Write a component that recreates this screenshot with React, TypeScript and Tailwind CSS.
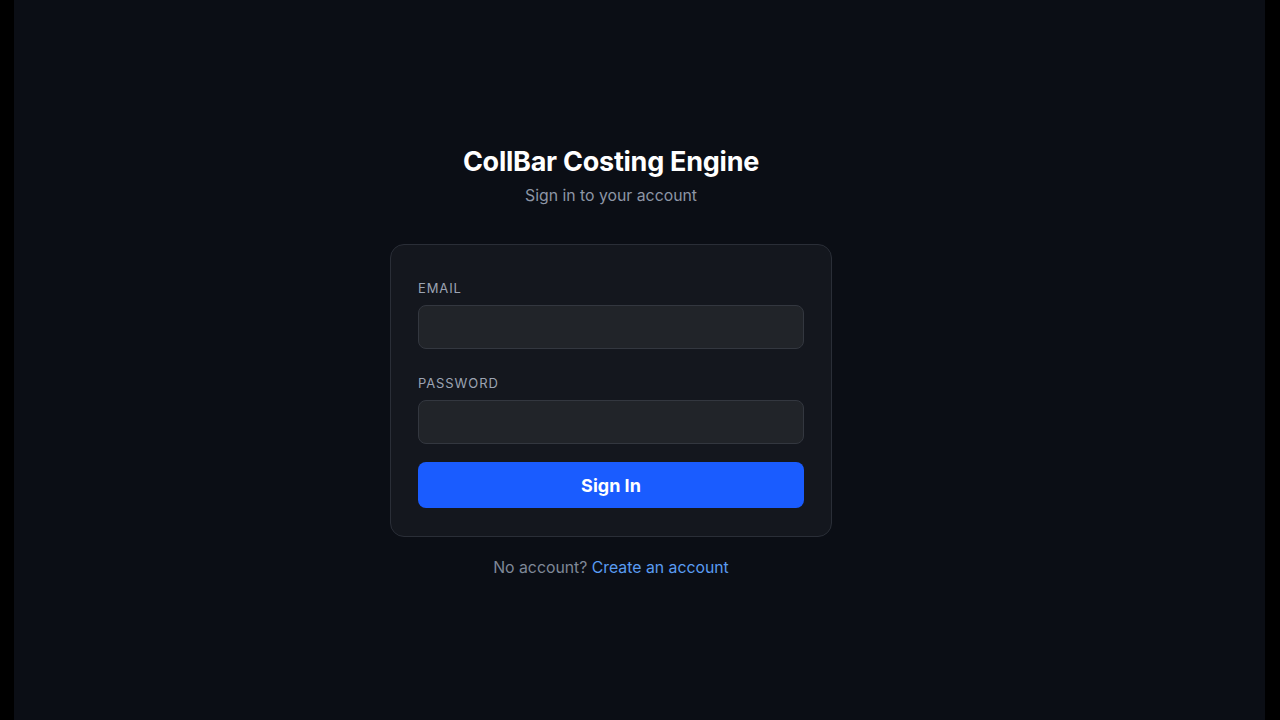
import React, { useState } from 'react';

const App = () => {
  const [email, setEmail] = useState('');
  const [password, setPassword] = useState('');

  return (
    <div className="flex h-screen w-full bg-black" style={{ fontFamily: 'Inter, "Noto Sans", sans-serif' }}>
      <div className="ml-[14px] flex h-full w-[1251px] items-center justify-center bg-[#0b0e15] pt-[5px] pr-[57px]">
        <div className="flex w-[442px] flex-col items-center">
          <h1 className="text-[27px] font-bold leading-[33px] tracking-[-0.25px] text-white">CollBar Costing Engine</h1>
          <p className="mt-[6px] text-[15.8px] leading-[24px] text-[#8d96a6]">Sign in to your account</p>

          <form
            className="mt-[36px] flex w-full flex-col rounded-[14px] border border-[#2a2e37] bg-[#14171e] px-[27px] pt-[35px] pb-[28px]"
            onSubmit={(e) => e.preventDefault()}
          >
            <label className="text-[13px] leading-[16px] tracking-[0.9px] text-[#9ca4b3]">EMAIL</label>
            <input
              type="email"
              value={email}
              onChange={(e) => setEmail(e.target.value)}
              className="mt-[9px] h-[44px] w-full rounded-[8px] border border-[#33373f] bg-[#212429] px-3 text-[15px] text-white outline-none"
            />

            <label className="mt-[26px] text-[13px] leading-[16px] tracking-[0.9px] text-[#9ca4b3]">PASSWORD</label>
            <input
              type="password"
              value={password}
              onChange={(e) => setPassword(e.target.value)}
              className="mt-[9px] h-[44px] w-full rounded-[8px] border border-[#33373f] bg-[#212429] px-3 text-[15px] text-white outline-none"
            />

            <button
              type="submit"
              className="mt-[18px] h-[46px] w-full rounded-[8px] bg-[#1a5cff] text-[18px] font-bold text-white"
            >
              Sign In
            </button>
          </form>

          <p className="mt-[19px] text-[15.8px] leading-[24px] text-[#7f8898]">
            No account?{' '}
            <a href="#" className="text-[#5a9cf2]">
              Create an account
            </a>
          </p>
        </div>
      </div>
    </div>
  );
};

export default App;
